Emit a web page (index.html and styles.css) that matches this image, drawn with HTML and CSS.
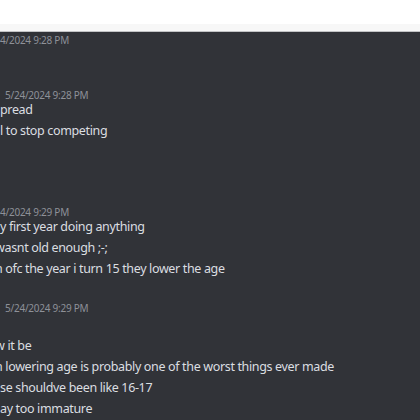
FILE: index.html
```html
<!DOCTYPE html>
<html lang="en">
<head>
<meta charset="utf-8">
<title>Chat</title>
<link rel="stylesheet" href="styles.css">
</head>
<body>
<div class="topbar"></div>
<div class="subbar"></div>
<main class="chat">
  <section class="group g1">
    <div class="meta"><span class="time">4/2024 9:28 PM</span></div>
  </section>
  <section class="group g2">
    <div class="meta named"><span class="time">5/24/2024 9:28 PM</span></div>
    <p class="line">pread</p>
    <p class="line">l to stop competing</p>
  </section>
  <section class="group g3">
    <div class="meta"><span class="time">4/2024 9:29 PM</span></div>
    <p class="line">y first year doing anything</p>
    <p class="line"><span class="cut">w</span>asnt old enough ;-;</p>
    <p class="line"><span class="cut">n</span> ofc the year i turn 15 they lower the age</p>
  </section>
  <section class="group g4">
    <div class="meta named"><span class="time">5/24/2024 9:29 PM</span></div>
    <p class="line"><span class="cut">w</span> it be</p>
    <p class="line"><span class="cut">n</span> lowering age is probably one of the worst things ever made</p>
    <p class="line">se shouldve been like 16-17</p>
    <p class="line">ay too immature</p>
  </section>
</main>
</body>
</html>
```
FILE: styles.css
```css
html, body {
  margin: 0;
  padding: 0;
  background: #313338;
}
body {
  font-family: "Noto Sans", "Open Sans", sans-serif;
  width: 420px;
  height: 420px;
  overflow: hidden;
}
.topbar {
  height: 24px;
  background: #ffffff;
}
.subbar {
  height: 7px;
  background: #f7f7f7;
  border-bottom: 1px solid #c2c3c5;
}
.chat {
  background: #313338;
  display: flex;
  flex-direction: column;
}
.group {
  display: flex;
  flex-direction: column;
}
.meta {
  height: 12px;
  line-height: 12px;
}
.meta.named {
  padding-left: 5px;
}
.time {
  font-size: 10px;
  letter-spacing: -0.25px;
  color: #8e9198;
  white-space: nowrap;
}
.line {
  margin: 0;
  font-size: 12.5px;
  letter-spacing: -0.35px;
  line-height: 21px;
  color: #dbdee1;
  white-space: nowrap;
}
.cut {
  display: inline-block;
  margin-left: -5px;
}
.g1 { margin-top: 0; }
.g2 { margin-top: 43px; }
.g3 { margin-top: 63px; }
.g4 { margin-top: 21px; }
.g4 .meta { margin-bottom: 23px; }
```
